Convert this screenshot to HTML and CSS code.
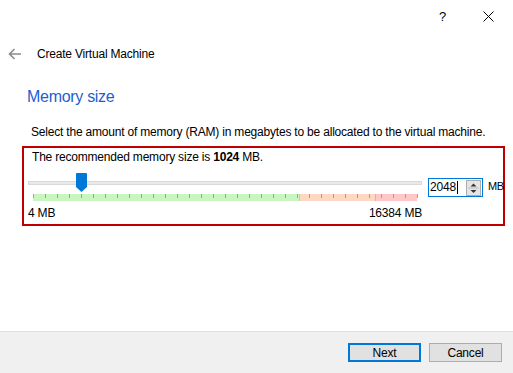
FILE: index.html
```html
<!DOCTYPE html>
<html lang="en">

<head>
    <meta charset="UTF-8">
    <meta name="viewport" content="width=device-width, initial-scale=1.0">
    <title>Create Virtual Machine</title>
    <link rel="stylesheet" href="styles.css">
</head>

<body>
    <div class="window">
        <div class="titlebar">
            <span class="help">?</span>
            <svg class="close" width="11" height="11" viewBox="0 0 11 11">
                <path d="M0.5 0.5 L10.5 10.5 M10.5 0.5 L0.5 10.5" stroke="#000" stroke-width="1" fill="none" />
            </svg>
        </div>

        <div class="nav">
            <svg class="back" width="14" height="12" viewBox="0 0 14 12">
                <path d="M13 6 H1.5 M6.5 1 L1.5 6 L6.5 11" stroke="#8a8a8a" stroke-width="1.6" fill="none" />
            </svg>
            <span class="nav-title">Create Virtual Machine</span>
        </div>

        <h2 class="heading">Memory size</h2>
        <p class="desc">Select the amount of memory (RAM) in megabytes to be allocated to the virtual machine.</p>

        <div class="panel">
            <div class="rec">The recommended memory size is <b>1024</b> MB.</div>

            <div class="slider-row">
                <div class="track">
                    <div class="groove"></div>
                    <svg class="handle" width="11" height="19" viewBox="0 0 11 19">
                        <path d="M1 0 H10 Q11 0 11 1 V14 L5.5 19 L0 14 V1 Q0 0 1 0 Z" fill="#0078d7" />
                    </svg>
                    <div class="scale"></div>
                </div>
                <div class="spinbox">
                    <span class="spin-value">2048</span><span class="caret"></span>
                    <div class="spin-btns">
                        <svg width="13" height="14" viewBox="0 0 13 14">
                            <path d="M3.5 5.5 L6.5 2.5 L9.5 5.5 Z" fill="#333" />
                            <path d="M1 7 H12" stroke="#bdbdbd" stroke-width="1" />
                            <path d="M3.5 9 L6.5 12 L9.5 9 Z" fill="#333" />
                        </svg>
                    </div>
                </div>
                <span class="unit">MB</span>
            </div>

            <div class="limits">
                <span>4 MB</span>
                <span>16384 MB</span>
            </div>
        </div>

        <div class="footer">
            <button class="btn btn-primary">Next</button>
            <button class="btn">Cancel</button>
        </div>
    </div>
</body>

</html>
```

FILE: styles.css
```css
body {
    margin: 0;
    font-family: 'Liberation Sans', Arial, sans-serif;
    font-size: 12px;
    letter-spacing: -0.2px;
    color: #000;
    background: #fff;
}

.window {
    width: 513px;
    height: 373px;
    display: flex;
    flex-direction: column;
}

.titlebar {
    height: 32px;
    display: flex;
    align-items: center;
    justify-content: flex-end;
    padding-right: 19px;
}

.help {
    font-size: 13px;
    margin-right: 37px;
}

.nav {
    height: 44px;
    display: flex;
    align-items: center;
    padding-left: 8px;
}

.back {
    margin-right: 15px;
}

.nav-title {
    font-size: 12px;
}

.heading {
    margin: 11px 0 0 27px;
    font-size: 16px;
    line-height: 20px;
    letter-spacing: -0.3px;
    font-weight: normal;
    color: #1a5fcf;
}

.desc {
    margin: 18px 0 0 31px;
    line-height: 15px;
}

.panel {
    margin: 6px 8px 0 22px;
    border: 2px solid #c00000;
    padding: 2px 0 3px 0;
}

.rec {
    padding-left: 8px;
    line-height: 15px;
}

.slider-row {
    display: flex;
    align-items: flex-start;
    height: 36px;
}

.track {
    position: relative;
    flex: none;
    width: 394px;
    height: 36px;
    margin-left: 4px;
}

.groove {
    position: absolute;
    top: 16px;
    left: 0;
    right: 0;
    height: 2px;
    background: #e9e9e9;
    border: 1px solid #d9d9d9;
}

.handle {
    position: absolute;
    top: 8px;
    left: 48px;
}

.scale {
    position: absolute;
    top: 29px;
    left: 5px;
    width: 384px;
    height: 7px;
    background: linear-gradient(to right,
        #c8f5c0 0, #c8f5c0 266px,
        #f0b8a0 266px, #f0b8a0 267px,
        #ffd8c4 267px, #ffd8c4 342px,
        #f3a6a6 342px, #f3a6a6 343px,
        #ffc8c8 343px, #ffc8c8 384px);
}

.scale::after {
    content: '';
    position: absolute;
    top: 0;
    left: 0;
    width: 385px;
    height: 4px;
    background: repeating-linear-gradient(to right,
        #a0a0a0 0, #a0a0a0 1px,
        transparent 1px, transparent 12px);
}

.spinbox {
    flex: none;
    display: flex;
    align-items: center;
    width: 52px;
    height: 17px;
    margin: 13px 0 0 6px;
    border: 1px solid #0078d7;
    padding-left: 1px;
}

.spin-value {
    line-height: 17px;
}

.caret {
    width: 1px;
    height: 13px;
    background: #000;
    margin-left: 1px;
}

.spin-btns {
    margin-left: auto;
    margin-right: 1px;
    width: 13px;
    height: 14px;
    border: 1px solid #adadad;
    background: #e5e5e5;
    display: flex;
}

.unit {
    flex: none;
    margin: 15px 0 0 5px;
    font-size: 11px;
    letter-spacing: -0.4px;
}

.limits {
    display: flex;
    justify-content: space-between;
    width: 394px;
    margin: 5px 0 0 4px;
    line-height: 15px;
}

.footer {
    margin-top: auto;
    height: 41px;
    border-top: 1px solid #dfdfdf;
    background: #f0f0f0;
    display: flex;
    align-items: center;
    justify-content: flex-end;
    gap: 8px;
    padding-right: 11px;
}

.btn {
    width: 73px;
    height: 19px;
    font-family: 'Liberation Sans', Arial, sans-serif;
    font-size: 12px;
    letter-spacing: -0.2px;
    background: #e1e1e1;
    border: 1px solid #adadad;
    padding: 0;
    color: #000;
}

.btn-primary {
    border: 2px solid #0078d7;
}
```
